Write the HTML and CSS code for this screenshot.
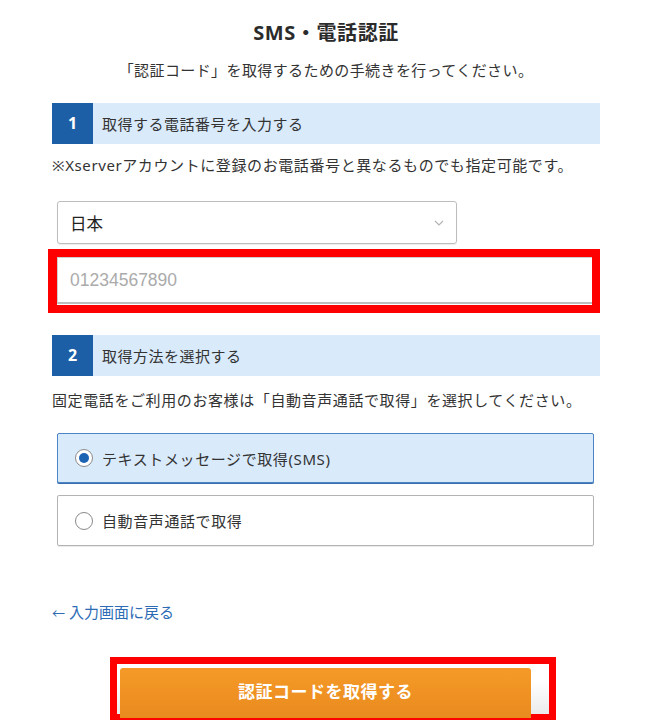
FILE: index.html
```html
<!DOCTYPE html>
<html lang="ja">

<head>
    <meta charset="UTF-8">
    <meta name="viewport" content="width=device-width, initial-scale=1.0">
    <title>SMS・電話認証</title>
    <link rel="stylesheet" href="styles.css">
</head>

<body>
    <div class="page">
        <h1 class="title">SMS・電話認証</h1>
        <p class="lead">「認証コード」を取得するための手続きを行ってください。</p>

        <div class="step step-first">
            <span class="step-num">1</span>
            <span class="step-label">取得する電話番号を入力する</span>
        </div>
        <p class="note">※Xserverアカウントに登録のお電話番号と異なるものでも指定可能です。</p>

        <div class="select-box">
            <span class="select-value">日本</span>
            <svg class="select-arrow" width="10" height="6" viewBox="0 0 10 6">
                <path d="M1 1 L5 5 L9 1" fill="none" stroke="#b5b5b5" stroke-width="1.2" />
            </svg>
        </div>

        <div class="mark mark-input">
            <input class="tel-input" type="text" placeholder="01234567890">
        </div>

        <div class="step step-second">
            <span class="step-num">2</span>
            <span class="step-label">取得方法を選択する</span>
        </div>
        <p class="note note-second">固定電話をご利用のお客様は「自動音声通話で取得」を選択してください。</p>

        <div class="options">
            <label class="option option-active">
                <input type="radio" name="method" checked>
                <span>テキストメッセージで取得(SMS)</span>
            </label>
            <label class="option">
                <input type="radio" name="method">
                <span>自動音声通話で取得</span>
            </label>
        </div>

        <a class="back" href="#"><span class="back-arrow">←</span> 入力画面に戻る</a>

        <div class="mark mark-button">
            <button class="btn-get" type="button">認証コードを取得する</button>
        </div>
    </div>
</body>

</html>
```

FILE: styles.css
```css
body {
    margin: 0;
    background-color: #fff;
    color: #333;
    font-family: "Noto Sans", "Noto Sans CJK JP", sans-serif;
}

.page {
    width: 548px;
    margin-left: 52px;
    padding-top: 20px;
}

.title {
    margin: 0;
    font-size: 20px;
    line-height: 26px;
    font-weight: bold;
    letter-spacing: 0.6px;
    text-align: center;
    color: #2b2b2b;
}

.lead {
    margin: 13px 0 0;
    font-size: 15px;
    line-height: 22px;
    letter-spacing: 0.4px;
    text-align: center;
}

.step {
    display: flex;
    align-items: center;
    height: 41px;
    background-color: #d9eafb;
}

.step-first {
    margin-top: 22px;
}

.step-second {
    margin-top: 22px;
}

.step-num {
    width: 41px;
    height: 41px;
    line-height: 41px;
    text-align: center;
    background-color: #1d5fa6;
    color: #fff;
    font-weight: bold;
    font-size: 16px;
}

.step-label {
    padding-left: 9px;
    font-size: 15px;
    letter-spacing: 0.5px;
}

.note {
    margin: 10px 0 0;
    font-size: 15px;
    line-height: 22px;
    letter-spacing: 0.6px;
}

.note-second {
    margin-top: 13px;
}

.select-box {
    display: flex;
    align-items: center;
    justify-content: space-between;
    box-sizing: border-box;
    width: 400px;
    height: 43px;
    margin: 25px 0 0 5px;
    padding: 0 12px 0 12px;
    border: 1px solid #bdbdbd;
    border-radius: 3px;
    box-shadow: 0 1px 1px rgba(0, 0, 0, 0.08);
    font-size: 16.5px;
    color: #222;
}

.mark {
    border: 8px solid #ff0000;
    box-sizing: border-box;
    background-color: #fff;
}

.mark-input {
    width: 552px;
    margin: 5px 0 0 -4px;
    border-left-width: 9px;
    padding-bottom: 1px;
}

.tel-input {
    display: block;
    box-sizing: border-box;
    width: 100%;
    height: 47px;
    padding: 0 12px;
    border: 1px solid #cfcfcf;
    border-right: none;
    border-bottom: 2px solid #bdbdbd;
    font-family: "Liberation Sans", sans-serif;
    font-size: 17.5px;
    color: #333;
    outline: none;
}

.tel-input::placeholder {
    color: #ababab;
}

.options {
    display: flex;
    flex-direction: column;
    gap: 12px;
    margin: 22px 0 0 5px;
    width: 537px;
}

.option {
    display: flex;
    align-items: center;
    gap: 9px;
    box-sizing: border-box;
    height: 51px;
    padding-left: 17px;
    border: 1px solid #b3b3b3;
    border-radius: 2px;
    box-shadow: 0 1px 0 rgba(0, 0, 0, 0.08);
    font-size: 15px;
    letter-spacing: 0.6px;
}

.option-active {
    height: 50px;
    background-color: #d9eafb;
    border-color: #4b85c6;
    box-shadow: 0 1px 0 #3a6fae;
}

.option input {
    appearance: none;
    -webkit-appearance: none;
    margin: 0;
    width: 18px;
    height: 18px;
    border: 1px solid #8a8a8a;
    border-radius: 50%;
    background-color: #fff;
    position: relative;
}

.option input:checked::after {
    content: "";
    position: absolute;
    left: 3px;
    top: 3px;
    width: 10px;
    height: 10px;
    border-radius: 50%;
    background-color: #1d63b4;
}

.back {
    display: block;
    margin-top: 55px;
    line-height: 22px;
    font-size: 15px;
    color: #2d6cb5;
    text-decoration: none;
}

.back-arrow {
    font-size: 13px;
}

.mark-button {
    width: 446px;
    margin: 33px 0 0 58px;
    border-width: 7px;
    padding: 4px 0 0 3px;
    background: linear-gradient(to bottom, #fff 35%, #ebebeb 100%);
    height: 64px;
}

.btn-get {
    display: block;
    width: 411px;
    height: 50px;
    border: none;
    border-radius: 3px 3px 0 0;
    background: linear-gradient(to bottom, #f59a28, #e98a1e);
    color: #fff;
    font-family: "Noto Sans", "Noto Sans CJK JP", sans-serif;
    font-size: 17px;
    font-weight: bold;
    letter-spacing: 0.5px;
    padding-bottom: 6px;
}
```
